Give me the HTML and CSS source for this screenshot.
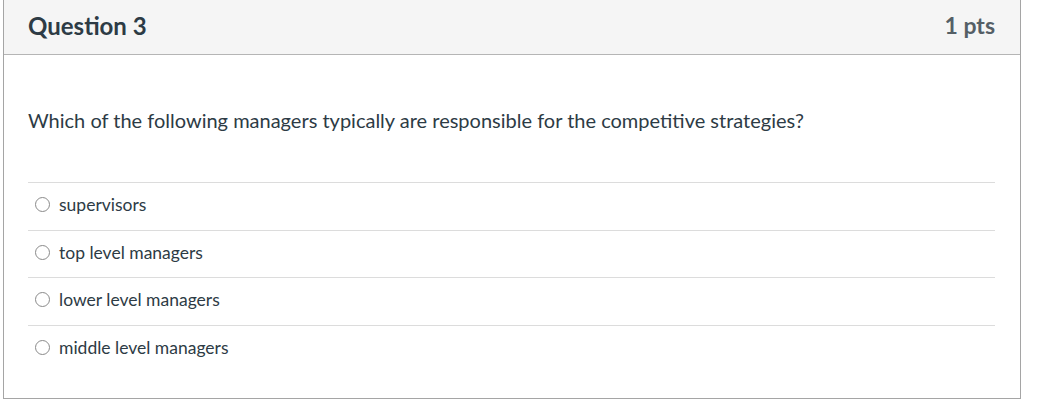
FILE: index.html
```html
<!DOCTYPE html>
<html>
<head>
<meta charset="utf-8">
<link rel="stylesheet" href="styles.css">
</head>
<body>
<div class="quiz">
  <div class="quiz-header">
    <h2 class="quiz-title">Question 3</h2>
    <div class="quiz-pts">1 pts</div>
  </div>
  <div class="quiz-body">
    <p class="quiz-text">Which of the following managers typically are responsible for the competitive strategies?</p>
    <div class="answers">
      <label class="answer"><span class="radio"></span><span class="answer-label">supervisors</span></label>
      <label class="answer"><span class="radio"></span><span class="answer-label">top level managers</span></label>
      <label class="answer"><span class="radio"></span><span class="answer-label">lower level managers</span></label>
      <label class="answer"><span class="radio"></span><span class="answer-label">middle level managers</span></label>
    </div>
  </div>
</div>
</body>
</html>
```

FILE: styles.css
```css
html, body {
  margin: 0;
  padding: 0;
  background: #fff;
}
body {
  font-family: Lato, "Liberation Sans", sans-serif;
  color: #2d3b45;
}
.quiz {
  margin-left: 3px;
  width: 1018px;
  box-sizing: border-box;
  border: 1px solid #a5a5a5;
  border-top: none;
}
.quiz-header {
  height: 55px;
  box-sizing: border-box;
  background: #f5f5f5;
  border-bottom: 1px solid #b5b5b5;
  display: flex;
  align-items: center;
  justify-content: space-between;
  padding: 0 25px 4px 24px;
}
.quiz-title {
  margin: 0;
  font-size: 24px;
  font-weight: 700;
  color: #2d3b45;
}
.quiz-pts {
  font-size: 23px;
  font-weight: 700;
  color: #555f66;
}
.quiz-body {
  padding: 0 25px 26px 24px;
}
.quiz-text {
  margin: 0;
  height: 127px;
  display: flex;
  align-items: center;
  padding-top: 2px;
  box-sizing: border-box;
  font-size: 20px;
}
.answers {
  display: flex;
  flex-direction: column;
}
.answer {
  display: flex;
  align-items: center;
  gap: 9px;
  height: 47.5px;
  border-top: 1px solid #dcdcdc;
  padding-left: 7px;
  padding-bottom: 3px;
  font-size: 17.5px;
  box-sizing: border-box;
}
.radio {
  width: 15px;
  height: 15px;
  border: 1px solid #8a8a8a;
  border-radius: 50%;
  box-sizing: border-box;
  background: #fff;
}
```
